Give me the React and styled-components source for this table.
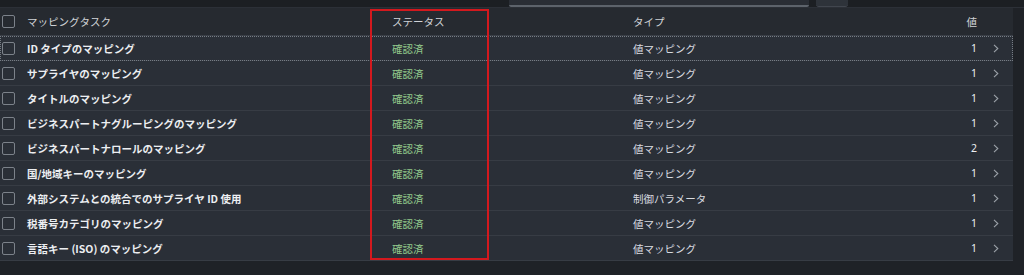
import React from "react";
import styled, { createGlobalStyle } from "styled-components";

const Global = createGlobalStyle`
  html, body { margin: 0; padding: 0; background: #1f2227; }
  body { font-family: "Noto Sans CJK JP", "Noto Sans", sans-serif; font-size: 10.5px; color: #dfe2e6; }
`;

const Page = styled.div`
  width: 1024px;
  height: 275px;
  background: #1f2227;
  overflow: hidden;
`;

const Toolbar = styled.div`
  height: 7px;
  background: #1c1f23;
  display: flex;
  align-items: flex-end;
  justify-content: flex-end;
  gap: 7px;
  padding-right: 176px;
  overflow: hidden;
  border-bottom: 1px solid #2c3037;
`;

const SearchField = styled.div`
  width: 300px;
  height: 30px;
  flex: none;
  background: #2a2e35;
  border-bottom: 2px solid #5d636b;
  border-radius: 0 0 2px 2px;
`;

const ToolButton = styled.div`
  width: 32px;
  height: 30px;
  flex: none;
  background: #2e333a;
  border-radius: 0 0 3px 3px;
  border-bottom: 1px solid #41464e;
`;

const TableWrap = styled.div`
  position: relative;
  width: 1013px;
`;

const Grid = styled.div`
  display: grid;
  grid-template-columns: 27px 365px 241px 1fr 44px 36px;
`;

const HeaderRow = styled(Grid)`
  height: 28px;
  background: #262a30;
  align-items: center;
  border-bottom: 1px solid #3a3f47;
  box-sizing: border-box;
`;

const Row = styled(Grid)`
  height: 25px;
  background: #2a2f37;
  align-items: center;
  border-bottom: 1px solid #373c44;
  box-sizing: border-box;
  ${(p) => p.$focused && `outline: 1px dotted #767c84; outline-offset: -1px;`}
`;

const CheckCell = styled.div`
  display: flex;
  align-items: center;
  padding-left: 2px;
`;

const Checkbox = styled.span`
  width: 13px;
  height: 13px;
  box-sizing: border-box;
  border: 1px solid #7c828a;
  border-radius: 2px;
  display: block;
`;

const HeadCell = styled.div`
  color: #d0d3d7;
  font-weight: 400;
  white-space: nowrap;
  text-align: ${(p) => (p.$right ? "right" : "left")};
`;

const NameCell = styled.div`
  color: #eceef1;
  font-weight: 700;
  white-space: nowrap;
`;

const StatusCell = styled.div`
  color: #92c98b;
  white-space: nowrap;
`;

const TypeCell = styled.div`
  color: #d9dce0;
  white-space: nowrap;
`;

const ValueCell = styled.div`
  color: #eceef1;
  text-align: right;
  font-family: "Noto Sans", sans-serif;
`;

const ChevronCell = styled.div`
  display: flex;
  align-items: center;
  padding-left: 16px;
`;

const Highlight = styled.div`
  position: absolute;
  left: 370px;
  top: 1px;
  width: 119px;
  height: 251px;
  border: 2px solid #d3191e;
  box-sizing: border-box;
  pointer-events: none;
`;

const Chevron = () => (
  <svg width="6" height="9" viewBox="0 0 6 9">
    <path d="M1 0.8 L4.8 4.5 L1 8.2" fill="none" stroke="#9ba1a8" strokeWidth="1.1" />
  </svg>
);

const rows = [
  ["ID タイプのマッピング", "値マッピング", "1"],
  ["サプライヤのマッピング", "値マッピング", "1"],
  ["タイトルのマッピング", "値マッピング", "1"],
  ["ビジネスパートナグルーピングのマッピング", "値マッピング", "1"],
  ["ビジネスパートナロールのマッピング", "値マッピング", "2"],
  ["国/地域キーのマッピング", "値マッピング", "1"],
  ["外部システムとの統合でのサプライヤ ID 使用", "制御パラメータ", "1"],
  ["税番号カテゴリのマッピング", "値マッピング", "1"],
  ["言語キー (ISO) のマッピング", "値マッピング", "1"],
];

export default function App() {
  return (
    <Page>
      <Global />
      <Toolbar>
        <SearchField />
        <ToolButton />
      </Toolbar>
      <TableWrap>
        <HeaderRow>
          <CheckCell><Checkbox /></CheckCell>
          <HeadCell>マッピングタスク</HeadCell>
          <HeadCell>ステータス</HeadCell>
          <HeadCell>タイプ</HeadCell>
          <HeadCell $right>値</HeadCell>
          <div />
        </HeaderRow>
        {rows.map(([name, type, val], i) => (
          <Row key={name} $focused={i === 0}>
            <CheckCell><Checkbox /></CheckCell>
            <NameCell>{name}</NameCell>
            <StatusCell>確認済</StatusCell>
            <TypeCell>{type}</TypeCell>
            <ValueCell>{val}</ValueCell>
            <ChevronCell><Chevron /></ChevronCell>
          </Row>
        ))}
        <Highlight />
      </TableWrap>
    </Page>
  );
}
